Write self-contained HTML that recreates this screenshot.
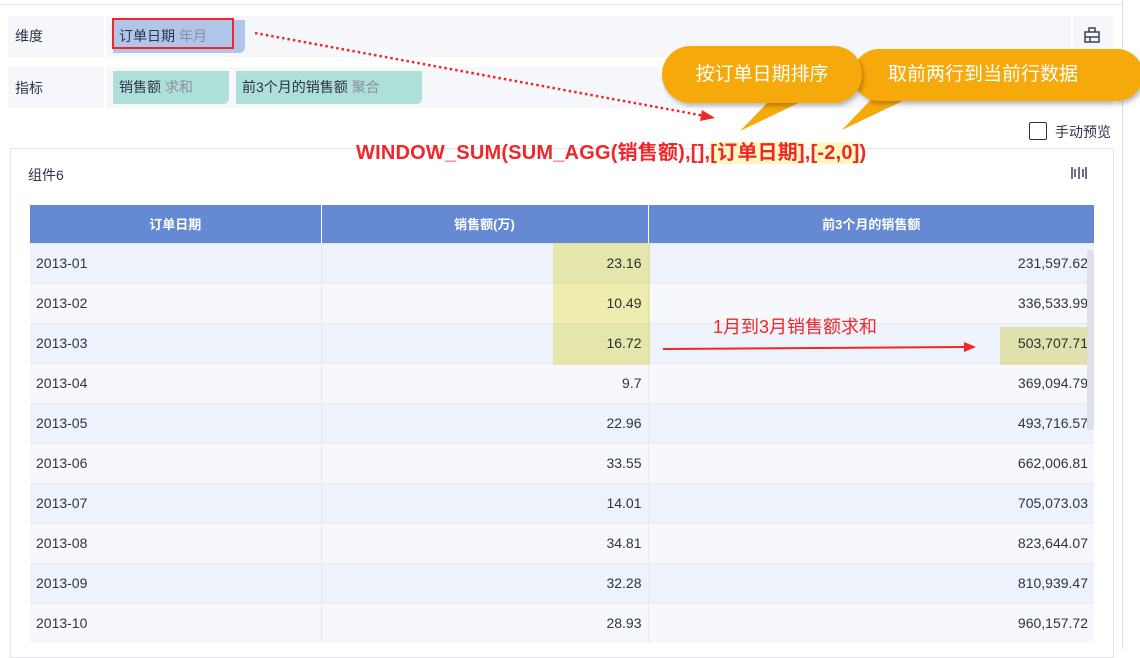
<!DOCTYPE html>
<html><head><meta charset="utf-8"><style>
*{margin:0;padding:0;box-sizing:border-box}
body{width:1140px;height:649px;overflow:hidden;background:#fff;position:relative;font-family:"Liberation Sans","Noto Sans CJK SC",sans-serif;color:#2b3448;font-size:14px}
.a{position:absolute}
.pill{position:absolute;height:33px;border-radius:0 0 6px 0;line-height:33px;padding-left:6px;font-size:14px;color:#2b3448}
.pill span{color:#8a8f9c}
table{position:absolute;left:30px;top:205px;width:1064px;border-collapse:collapse;font-size:14px}
th{background:#6589d3;color:#fff;height:38px;font-weight:bold;font-size:13px;border-left:1px solid #fff}
th:first-child{border-left:none}
td{height:40px;border-left:1px solid #e6e9f0;border-top:1px solid #e6e9f0;padding:0 6px;color:#2b3448}
td:first-child{border-left:none}
tr:nth-child(even) td{background:#eef2fa}
tr:nth-child(odd) td{background:#f7f8fc}
td.r{text-align:right}
.hl{position:absolute;mix-blend-mode:multiply}
.bub{position:absolute;background:#f5a90a;color:#fff;font-size:19px;text-align:center;box-shadow:2px 3px 4px rgba(0,0,0,.25)}
</style></head><body>
<div class="a" style="left:0;top:4px;width:1122px;height:1px;background:#e3e6ec"></div>
<div class="a" style="left:1122px;top:0;width:1px;height:649px;background:#dadde3"></div>
<div class="a" style="left:8px;top:16px;width:1105px;height:41px;background:#f6f7fb"></div>
<div class="a" style="left:104px;top:16px;width:2px;height:41px;background:#fff"></div>
<div class="a" style="left:1071px;top:16px;width:2px;height:41px;background:#fff"></div>
<div class="a" style="left:15px;top:26px">维度</div>
<div class="pill" style="left:113px;top:20px;width:132px;background:#b0c6e8">订单日期 <span>年月</span></div>
<div class="a" style="left:112px;top:18px;width:122px;height:31px;border:2px solid #f0262a"></div>
<svg class="a" style="left:1083px;top:26px" width="18" height="18" viewBox="0 0 18 18"><path d="M6 2h6v4H6z M2 6h14v10H2z M2 11h14 M7 11v5" fill="none" stroke="#3a4256" stroke-width="1.5"/></svg>
<div class="a" style="left:8px;top:67px;width:1105px;height:41px;background:#f6f7fb"></div>
<div class="a" style="left:104px;top:67px;width:2px;height:41px;background:#fff"></div>
<div class="a" style="left:15px;top:78px">指标</div>
<div class="pill" style="left:113px;top:71px;width:116px;background:#aedfd9">销售额 <span>求和</span></div>
<div class="pill" style="left:236px;top:71px;width:186px;background:#aedfd9">前3个月的销售额 <span>聚合</span></div>
<div class="a" style="left:1029px;top:122px;width:18px;height:18px;border:1.5px solid #2b3448;border-radius:2px"></div>
<div class="a" style="left:1055px;top:122px;font-size:14px">手动预览</div>
<div class="a" style="left:10px;top:148px;width:1104px;height:510px;border:1px solid #e3e6ec"></div>
<div class="a" style="left:28px;top:165px;font-size:14px">组件6</div>
<svg class="a" style="left:1070px;top:164px" width="18" height="18" viewBox="0 0 18 18"><path d="M2 3v12M5 5v8M9 3v12M13 5v8M16 3v12" stroke="#3a4256" stroke-width="1.5"/></svg>
<div class="a" style="left:356px;top:136px;font-size:20px;font-weight:bold;color:#f0262a;white-space:nowrap;letter-spacing:0.2px">WINDOW_SUM(SUM_AGG(销售额),[],<span style="background:#fdf8c0">[订单日期]</span>,<span style="background:#fdf8c0">[-2,0]</span>)</div>
<table>
<tr><th style="width:291px">订单日期</th><th style="width:327px">销售额(万)</th><th>前3个月的销售额</th></tr>
<tr><td>2013-01</td><td class="r">23.16</td><td class="r">231,597.62</td></tr>
<tr><td>2013-02</td><td class="r">10.49</td><td class="r">336,533.99</td></tr>
<tr><td>2013-03</td><td class="r">16.72</td><td class="r">503,707.71</td></tr>
<tr><td>2013-04</td><td class="r">9.7</td><td class="r">369,094.79</td></tr>
<tr><td>2013-05</td><td class="r">22.96</td><td class="r">493,716.57</td></tr>
<tr><td>2013-06</td><td class="r">33.55</td><td class="r">662,006.81</td></tr>
<tr><td>2013-07</td><td class="r">14.01</td><td class="r">705,073.03</td></tr>
<tr><td>2013-08</td><td class="r">34.81</td><td class="r">823,644.07</td></tr>
<tr><td>2013-09</td><td class="r">32.28</td><td class="r">810,939.47</td></tr>
<tr><td>2013-10</td><td class="r">28.93</td><td class="r">960,157.72</td></tr>
</table>
<div class="hl" style="left:553px;top:243px;width:97px;height:122px;background:#f6f3b0"></div>
<div class="hl" style="left:1000px;top:327px;width:94px;height:38px;background:#f0eeb0"></div>
<div class="a" style="left:1087px;top:250px;width:7px;height:180px;background:#dde0e6;border-radius:3px"></div>
<div class="a" style="left:713px;top:313px;font-size:18px;color:#f0262a;white-space:nowrap">1月到3月销售额求和</div>
<svg class="a" style="left:0;top:0" width="1140" height="649">
<line x1="255" y1="33" x2="705" y2="116" stroke="#f0262a" stroke-width="2.5" stroke-dasharray="2.5,3"/>
<polygon points="715,118 702,110 700,121" fill="#f0262a"/>
<line x1="663" y1="349" x2="965" y2="347" stroke="#f0262a" stroke-width="2"/>
<polygon points="976,347 964,342 964,352" fill="#f0262a"/>
<polygon points="842,130 880,90 915,95" fill="#f5a90a"/>
</svg>
<div class="bub" style="left:853px;top:49px;width:290px;height:52px;border-radius:26px;line-height:52px;padding-right:30px">取前两行到当前行数据</div>
<svg class="a" style="left:0;top:0" width="1140" height="649"><polygon points="740,131 775,95 815,95" fill="#f5a90a"/></svg>
<div class="bub" style="left:662px;top:46px;width:200px;height:57px;border-radius:29px;line-height:57px">按订单日期排序</div>
</body></html>
